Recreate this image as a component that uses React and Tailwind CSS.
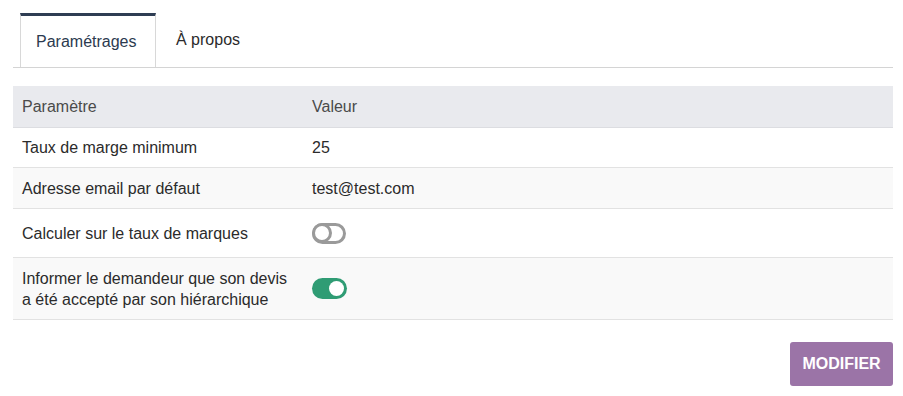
import React from 'react'

const rows = [
  { label: 'Taux de marge minimum', value: '25', h: 'h-[40px]' },
  { label: 'Adresse email par défaut', value: 'test@test.com', h: 'h-[41px]' },
  { label: 'Calculer sur le taux de marques', toggle: false, h: 'h-[49px]' },
  { label: 'Informer le demandeur que son devis a été accepté par son hiérarchique', toggle: true, h: 'h-[62px]' },
]

function Toggle({ on }) {
  if (on) {
    return (
      <span className="inline-flex items-center justify-end w-[35px] h-[21px] rounded-full bg-[#2f9c74] px-[3px]">
        <span className="w-[15px] h-[15px] rounded-full bg-white" />
      </span>
    )
  }
  return (
    <span className="inline-flex items-center w-[34px] h-[21px] rounded-full border-[3px] border-[#9a9a9a] bg-white">
      <span className="w-[20px] h-[20px] -ml-[3px] rounded-full border-[3px] border-[#9a9a9a] bg-white" />
    </span>
  )
}

export default function App() {
  return (
    <div className="bg-white pl-[13px] pr-[10px] pt-[13px] text-[16px] text-[#2b2b2b] font-['Liberation_Sans',Arial,sans-serif]">
      {/* Tabs */}
      <div className="flex border-b border-[#d4d4d4] pl-[7px]">
        <div className="w-[136px] h-[54px] -mb-px flex items-center pl-[15px] border-t-[3px] border-t-[#2e3d53] border-x border-x-[#d8d8d8] bg-white text-[#2b3a4f]">
          Paramétrages
        </div>
        <div className="h-[54px] flex items-center px-5 text-[#2b2b2b]">À propos</div>
      </div>

      {/* Table */}
      <div className="mt-[18px]">
        <div className="grid grid-cols-[299px_1fr] bg-[#e9eaee] border-b border-[#dcdde1] h-[42px] items-center text-[#4a4a4a]">
          <div className="pl-[9px]">Paramètre</div>
          <div>Valeur</div>
        </div>
        {rows.map((r, i) => (
          <div
            key={r.label}
            className={
              'grid grid-cols-[299px_1fr] items-center border-b border-[#e2e2e2] leading-[21px] ' +
              r.h + ' ' +
              (i % 2 === 1 ? 'bg-[#f9f9f9]' : 'bg-white')
            }
          >
            <div className="pl-[9px] pr-3">{r.label}</div>
            <div className="flex items-center">
              {r.toggle === undefined ? r.value : <Toggle on={r.toggle} />}
            </div>
          </div>
        ))}
      </div>

      <div className="flex justify-end mt-[22px]">
        <button className="w-[103px] h-[44px] rounded-[3px] bg-[#9b74a7] text-white font-bold text-[16px]">
          MODIFIER
        </button>
      </div>
    </div>
  )
}
